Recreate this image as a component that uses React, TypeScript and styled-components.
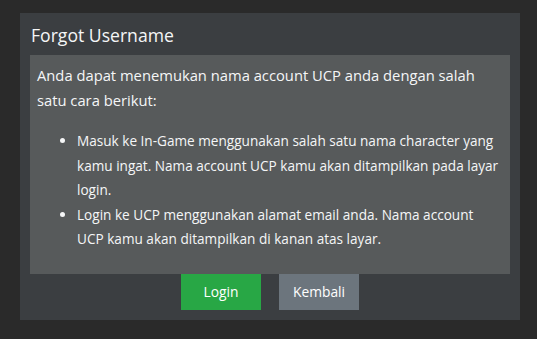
import { VFC } from "react";
import styled, { createGlobalStyle } from "styled-components";

const GlobalStyle = createGlobalStyle`
    html, body {
        margin: 0;
        padding: 0;
        background: #2a2a2a;
    }
    body {
        font-family: "Open Sans", "Noto Sans", sans-serif;
        color: #f5f6f7;
    }
`;

const App: VFC = () => {
    return (
        <>
            <GlobalStyle />
            <SPage>
                <SCard>
                    <STitle>Forgot Username</STitle>
                    <SBody>
                        <SIntro>
                            Anda dapat menemukan nama account UCP anda dengan
                            salah satu cara berikut:
                        </SIntro>
                        <SList>
                            <li>
                                Masuk ke In-Game menggunakan salah satu nama
                                character yang kamu ingat. Nama account UCP
                                kamu akan ditampilkan pada layar login.
                            </li>
                            <li>
                                Login ke UCP menggunakan alamat email anda.
                                Nama account UCP kamu akan ditampilkan di kanan
                                atas layar.
                            </li>
                        </SList>
                    </SBody>
                    <SActions>
                        <SButton variant="green">Login</SButton>
                        <SButton variant="gray">Kembali</SButton>
                    </SActions>
                </SCard>
            </SPage>
        </>
    );
};

export default App;

const SPage = styled.div`
    padding: 13px 17px 20px 20px;
`;

const SCard = styled.div`
    width: 500px;
    box-sizing: border-box;
    padding: 10px;
    background: #3b3e41;
`;

const STitle = styled.div`
    font-size: 17.6px;
    line-height: 24px;
    margin: 0 0 8px 1px;
`;

const SBody = styled.div`
    background: #575a5b;
    padding: 8px 7px 7px 7px;
`;

const SIntro = styled.p`
    margin: 0 0 16px 0;
    font-size: 14.76px;
    line-height: 25px;
`;

const SList = styled.ul`
    margin: 0 0 15px 0;
    padding-left: 40px;
    font-size: 13.6px;
    line-height: 24.5px;
`;

const SActions = styled.div`
    display: flex;
    justify-content: center;
    gap: 18px;
`;

const SButton = styled.button<{ variant: "green" | "gray" }>`
    width: 80px;
    height: 36px;
    border: none;
    border-radius: 0;
    font-family: inherit;
    font-size: 13.8px;
    color: #fff;
    background: ${(p) => (p.variant === "green" ? "#28a745" : "#6c757d")};
    cursor: pointer;
`;
